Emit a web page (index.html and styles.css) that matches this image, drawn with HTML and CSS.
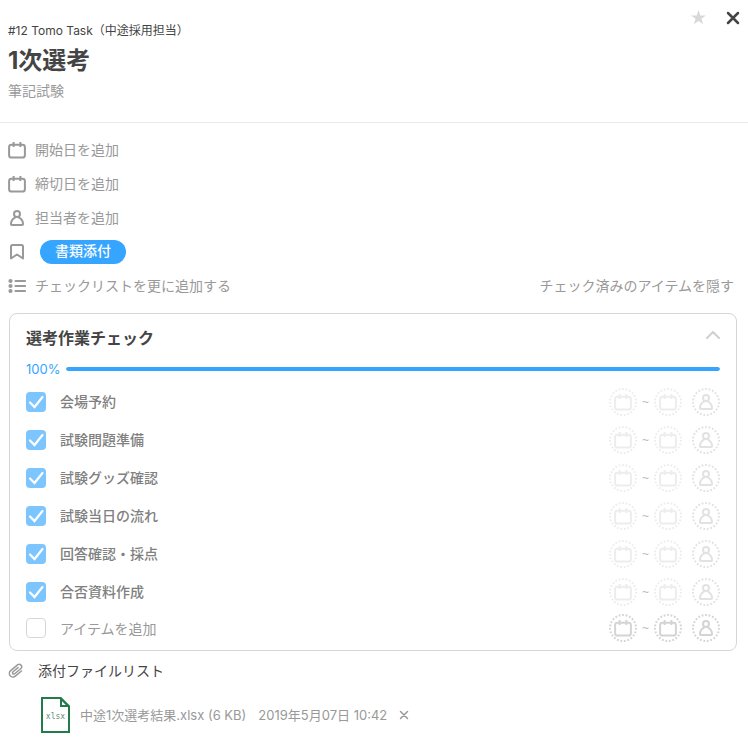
FILE: index.html
```html
<!DOCTYPE html>
<html lang="ja">
<head>
<meta charset="utf-8">
<meta name="viewport" content="width=device-width, initial-scale=1">
<title>1次選考</title>
<link rel="stylesheet" href="styles.css">
</head>
<body>
<svg class="sprite" aria-hidden="true">
  <symbol id="calendar" viewBox="0 0 18 18"><rect x="1.100" y="3.800" width="15.800" height="12.800" rx="2.400"/><path d="M5.600 1v5M12.400 1v5" stroke-linecap="butt"/></symbol>
  <symbol id="person" viewBox="0 0 18 18"><circle cx="9" cy="5" r="3"/><path d="M7 8.600C4.300 9.800 3 12 3 15.200q0 .8.8.8h10.400q.8 0 .8-.8C15 12 13.700 9.800 11 8.600"/></symbol>
  <symbol id="bookmark" viewBox="0 0 18 18"><path d="M3 15.500V3.500Q3 2 4.500 2h9Q15 2 15 3.500v12l-6-4z"/></symbol>
  <symbol id="list" viewBox="0 0 18 18"><path d="M7.500 4H17M7.500 9H17M7.500 14H17" stroke-width="2.100"/><g fill="currentColor" stroke="none"><circle cx="2.500" cy="4" r="2.100"/><circle cx="2.500" cy="9" r="2.100"/><circle cx="2.500" cy="14" r="2.100"/></g></symbol>
  <symbol id="ring" viewBox="0 0 28 28"><circle cx="14" cy="14" r="13" pathLength="46" stroke-dasharray="1 1"/></symbol>
</svg>

<main class="task">
  <header class="header">
    <div class="heading">
      <p class="project">#12 Tomo Task（中途採用担当）</p>
      <h1 class="title">1次選考</h1>
      <p class="note">筆記試験</p>
    </div>
    <div class="actions">
      <button type="button" class="star" aria-label="お気に入り"><svg viewBox="0 0 16 16"><path d="M8 0l1.900 5.800H16l-4.900 3.500 1.900 5.900L8 11.600l-5 3.600 1.900-5.900L0 5.800h6.100z"/></svg></button>
      <button type="button" class="close" aria-label="閉じる"><svg viewBox="0 0 14 14"><path d="M2 2l10 10M12 2L2 12" stroke-width="2.500"/></svg></button>
    </div>
  </header>

  <section class="fields">
    <div class="field"><svg class="icon"><use href="#calendar"/></svg><button type="button">開始日を追加</button></div>
    <div class="field"><svg class="icon"><use href="#calendar"/></svg><button type="button">締切日を追加</button></div>
    <div class="field"><svg class="icon"><use href="#person"/></svg><button type="button">担当者を追加</button></div>
    <div class="field"><svg class="icon"><use href="#bookmark"/></svg><button type="button" class="tag">書類添付</button></div>
    <div class="field"><svg class="icon"><use href="#list"/></svg><button type="button">チェックリストを更に追加する</button><button type="button" class="hide-done">チェック済みのアイテムを隠す</button></div>
  </section>

  <section class="card">
    <div class="card-head">
      <h2>選考作業チェック</h2>
      <button type="button" class="collapse" aria-label="折りたたむ"><svg class="chevron" viewBox="0 0 14 8"><path d="M1 7l6-6 6 6"/></svg></button>
    </div>
    <div class="progress"><label for="done">100%</label><progress id="done" value="100" max="100"></progress></div>
    <ul class="items">
      <li class="item"><label><input type="checkbox" checked><span>会場予約</span></label></li>
      <li class="item"><label><input type="checkbox" checked><span>試験問題準備</span></label></li>
      <li class="item"><label><input type="checkbox" checked><span>試験グッズ確認</span></label></li>
      <li class="item"><label><input type="checkbox" checked><span>試験当日の流れ</span></label></li>
      <li class="item"><label><input type="checkbox" checked><span>回答確認・採点</span></label></li>
      <li class="item"><label><input type="checkbox" checked><span>合否資料作成</span></label></li>
      <li class="item new"><input type="checkbox" aria-label="完了"><input type="text" class="new-name" placeholder="アイテムを追加" aria-label="アイテムを追加"></li>
    </ul>
  </section>

  <section class="files">
    <h2 class="files-head"><svg class="clip" viewBox="0 0 16 16"><path d="M10 4.600L5 8.800a1.300 1.300 0 0 0 1.700 2l6.300-5.300a2.500 2.500 0 0 0-3.200-3.800L2.700 7.600a3.600 3.600 0 0 0 4.600 5.600l6.200-5.200"/></svg>添付ファイルリスト</h2>
    <div class="file">
      <svg class="xlsx" viewBox="0 0 30 36"><path d="M2 1h18.500l8.500 8.500V35H2z"/><path d="M21 1.500v7.500h7.500z"/><text x="15.500" y="22">xlsx</text></svg>
      <a href="#file">中途1次選考結果.xlsx (6 KB)</a>
      <time datetime="2019-05-07T10:42">2019年5月07日 10:42</time>
      <button type="button" aria-label="削除"><svg class="remove" viewBox="0 0 10 10"><path d="M1.500 1.500l7 7M8.500 1.500l-7 7"/></svg></button>
    </div>
  </section>
</main>
<script src="items.js"></script>
</body>
</html>
```
FILE: styles.css
```css
* { box-sizing: border-box; }
body, h1, h2, p, ul { margin: 0; padding: 0; }
body {
  background: #fff;
  color: #444;
  font: 14px/20px Inter, "Noto Sans CJK JP", sans-serif;
}
button {
  padding: 0;
  border: 0;
  background: none;
  color: inherit;
  font: inherit;
  cursor: pointer;
}
svg {
  display: block;
  fill: none;
  stroke: currentColor;
  stroke-width: 2;
  stroke-linecap: round;
  stroke-linejoin: round;
}
.sprite { width: 0; height: 0; position: absolute; }

.header {
  display: flex;
  justify-content: space-between;
  padding: 0 8px 22px;
  border-bottom: 1px solid #ebebeb;
}
.heading { padding-top: 22px; }
.project { font-size: 12px; line-height: 18px; }
.title { font-size: 24px; line-height: 42px; }
.note { color: #999; line-height: 18px; }
.actions { display: flex; align-items: flex-start; gap: 20px; padding-top: 10px; }
.star { color: #d8d8d8; }
.star svg { width: 15px; height: 15px; fill: currentColor; stroke: none; }
.close svg { width: 14px; height: 14px; }
.close { padding-top: 1px; }

.fields { padding: 10px 14px 10px 8px; color: #999; }
.field { display: flex; align-items: center; gap: 9px; height: 34px; }
.icon { width: 18px; height: 18px; }
.tag {
  height: 24px;
  margin-left: 5px;
  padding: 0 15px 2px;
  border-radius: 12px;
  background: #35a5ff;
  color: #fff;
  font-weight: 500;
}
.hide-done { margin-left: auto; }

.card {
  margin: 0 11px 0 9px;
  padding: 8px 16px 5px;
  border: 1px solid #d6d6d6;
  border-radius: 8px;
}
.card-head { display: flex; align-items: center; justify-content: space-between; height: 32px; }
.card-head h2 { font-size: 16px; line-height: 24px; }
.collapse { padding-bottom: 6px; }
.chevron { width: 14px; height: 8px; color: #d0d0d0; }
.progress { display: flex; align-items: center; gap: 6px; height: 29px; color: #35a5ff; }
.progress label { width: 34px; font-size: 13px; }
progress {
  flex: 1;
  appearance: none;
  height: 4px;
  border: 0;
  border-radius: 2px;
  overflow: hidden;
  background: #e5e5e5;
}
progress::-webkit-progress-bar { background: #e5e5e5; }
progress::-webkit-progress-value { background: #35a5ff; border-radius: 2px; }

.items { list-style: none; }
.item { display: flex; align-items: center; height: 38px; }
.item label { display: flex; align-items: center; gap: 14px; color: #808080; font-weight: 500; }
.item.new { height: 34px; gap: 14px; }
input[type="checkbox"] {
  appearance: none;
  display: block;
  flex: none;
  width: 20px;
  height: 20px;
  margin: 0;
  border: 1px solid #d6d6d6;
  border-radius: 4px;
  background: #fff;
}
input[type="checkbox"]:checked {
  border: 0;
  background: #7cc5ff url("data:image/svg+xml,%3Csvg xmlns='http://www.w3.org/2000/svg' viewBox='0 0 20 20'%3E%3Cpath d='M4 10.500l4.500 4.500L16.500 5' fill='none' stroke='%23fff' stroke-width='2.200' stroke-linecap='round'/%3E%3C/svg%3E");
}
.new-name {
  flex: 1;
  min-width: 0;
  height: 24px;
  padding: 0;
  border: 0;
  outline: 0;
  background: none;
  font: inherit;
}
.new-name::placeholder { color: #999; opacity: 1; }

.assign { display: flex; align-items: center; margin-left: auto; color: #ededed; }
.assign .who { margin-left: 10px; color: #e2e2e2; }
.new .assign, .new .who { color: #d4d4d4; }
.slot { display: grid; place-items: center; }
.slot svg { grid-area: 1 / 1; }
.ring { width: 28px; height: 28px; stroke-linecap: butt; }
.tilde { width: 17px; color: #bbb; font-family: "Liberation Sans", sans-serif; font-size: 12px; text-align: center; }

.files-head {
  display: flex;
  align-items: center;
  gap: 14px;
  height: 40px;
  padding-left: 8px;
  font-size: 14px;
  font-weight: 400;
}
.clip { width: 16px; height: 16px; color: #999; stroke-width: 1.5; }
.file {
  display: flex;
  align-items: center;
  gap: 12px;
  padding: 6px 8px 20px 40px;
  color: #999;
  font-size: 13px;
}
.file a { color: inherit; text-decoration: none; }
.xlsx { width: 30px; height: 36px; margin-right: -2px; color: #217b4b; stroke-linejoin: miter; }
.xlsx text {
  fill: #5d8f74;
  stroke: none;
  font: 8px "DejaVu Sans Mono", monospace;
  text-anchor: middle;
}
.remove { width: 10px; height: 10px; stroke-width: 1.5; }
```
FILE: items.js
```js
// Adds the start date, due date and assignee slots to every checklist row.
const slot = (icon, label, extra) =>
  `<button type="button" class="slot ${extra}" aria-label="${label}">` +
  `<svg class="ring"><use href="#ring"/></svg><svg class="icon"><use href="#${icon}"/></svg></button>`;

document.querySelectorAll(".item").forEach((row) => {
  row.insertAdjacentHTML("beforeend",
    `<div class="assign">${slot("calendar", "開始日", "")}<span class="tilde">~</span>` +
    `${slot("calendar", "締切日", "")}${slot("person", "担当者", "who")}</div>`);
});
```
